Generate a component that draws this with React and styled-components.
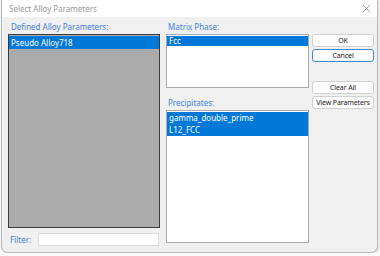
import React from "react";
import styled, { createGlobalStyle } from "styled-components";

const Global = createGlobalStyle`
  html, body { margin: 0; padding: 0; background: #fafafa; }
  body { font-family: "Segoe UI", "Noto Sans", "Open Sans", sans-serif; font-size: 8px; }
  * { box-sizing: border-box; }
`;

const Window = styled.div`
  margin-left: 1px;
  width: 377px;
  height: 253px;
  border: 1px solid #b9b9b9;
  border-top: none;
  border-radius: 0 0 7px 7px;
  background: #f0f0f0;
  box-shadow: 1px 1px 3px rgba(0,0,0,0.12);
  display: flex;
  flex-direction: column;
  overflow: hidden;
`;

const TitleBar = styled.div`
  height: 17px;
  background: #ffffff;
  display: flex;
  align-items: center;
  justify-content: space-between;
  padding: 0 5px 0 7px;
  color: #9a9a9a;
  font-size: 8px;
`;

const Close = styled.svg`
  width: 9px;
  height: 9px;
  margin-right: 1px;
`;

const Body = styled.div`
  flex: 1;
  display: flex;
  padding: 3px 0 0 6px;
`;

const LeftCol = styled.div`
  width: 152px;
  display: flex;
  flex-direction: column;
`;

const MidCol = styled.div`
  width: 143px;
  margin-left: 6px;
  display: flex;
  flex-direction: column;
`;

const RightCol = styled.div`
  width: 62px;
  margin-left: 3px;
  padding-top: 14px;
  display: flex;
  flex-direction: column;
`;

const Label = styled.div`
  height: 14px;
  line-height: 14px;
  color: #4382d6;
  padding-left: ${(p) => p.$indent || 2}px;
  margin-top: ${(p) => p.$top || 0}px;
  white-space: nowrap;
`;

const List = styled.div`
  height: ${(p) => p.$h}px;
  background: ${(p) => (p.$dark ? "#ababab" : "#ffffff")};
  border: 1px solid ${(p) => (p.$dark ? "#3a3a3a" : "#a9abb1")};
  padding: 1px 0;
  display: flex;
  flex-direction: column;
`;

const Item = styled.div`
  height: ${(p) => p.$h || 12}px;
  line-height: ${(p) => p.$h || 12}px;
  background: #0078d7;
  color: #ffffff;
  padding-left: 2px;
  white-space: nowrap;
`;

const FilterRow = styled.div`
  display: flex;
  align-items: center;
  margin-top: 5px;
`;

const FilterLabel = styled.div`
  width: 30px;
  color: #4382d6;
  padding-left: 2px;
`;

const FilterInput = styled.div`
  width: 121px;
  height: 13px;
  background: #ffffff;
  border: 1px solid #dcdcdc;
`;

const Button = styled.div`
  height: 13px;
  line-height: 11px;
  text-align: center;
  background: #fdfdfd;
  border: 1px solid ${(p) => (p.$focus ? "#3b8ad9" : "#d0d0d0")};
  border-radius: 3px;
  color: #1a1a1a;
  font-size: 7px;
  letter-spacing: -0.1px;
  margin-top: ${(p) => p.$top || 0}px;
  white-space: nowrap;
`;

export default function App() {
  return (
    <>
      <Global />
      <Window>
        <TitleBar>
          <span>Select Alloy Parameters</span>
          <Close viewBox="0 0 10 10">
            <path d="M1 1 L9 9 M9 1 L1 9" stroke="#8a8a8a" strokeWidth="0.9" />
          </Close>
        </TitleBar>
        <Body>
          <LeftCol>
            <Label $indent={3}>Defined Alloy Parameters:</Label>
            <List $dark $h={194}>
              <Item $h={13}>Pseudo Alloy718</Item>
            </List>
            <FilterRow>
              <FilterLabel>Filter:</FilterLabel>
              <FilterInput />
            </FilterRow>
          </LeftCol>
          <MidCol>
            <Label>Matrix Phase:</Label>
            <List $h={54}>
              <Item $h={10}>Fcc</Item>
            </List>
            <Label $top={8}>Precipitates:</Label>
            <List $h={133}>
              <Item>gamma_double_prime</Item>
              <Item>L12_FCC</Item>
            </List>
          </MidCol>
          <RightCol>
            <Button>OK</Button>
            <Button $focus $top={2}>Cancel</Button>
            <Button $top={19}>Clear All</Button>
            <Button $top={2}>View Parameters</Button>
          </RightCol>
        </Body>
      </Window>
    </>
  );
}
